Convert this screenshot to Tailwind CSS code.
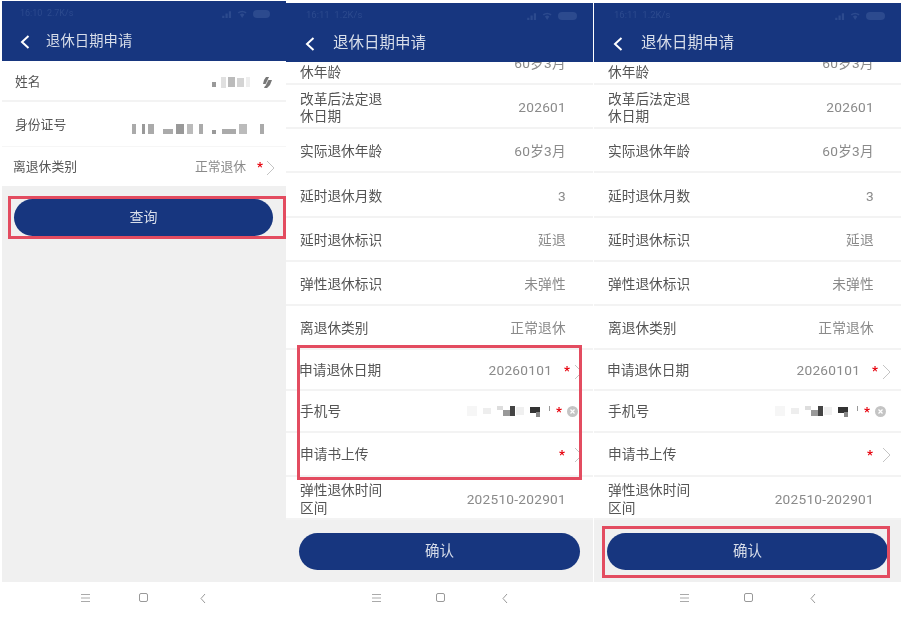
<!DOCTYPE html>
<html lang="zh-CN">
<head>
  <meta charset="UTF-8">
  <title>退休日期申请</title>
  <script src="https://cdn.jsdelivr.net/npm/@tailwindcss/browser@4"></script>
</head>
<body class="bg-white">
  <div id="app" class="relative w-[901px] h-[621px] overflow-hidden flex items-start bg-white font-['Roboto','Noto_Sans_CJK_SC',sans-serif] blur-[0.5px]">

    <!-- 查询 -->
    <section class="ml-[2px] mt-[1px] w-[284px] shrink-0 flex flex-col">
      <div class="h-[60px] bg-[#17367f]">
        <div class="h-[24px] flex items-center pl-[18px] pr-[16px] pt-[2px] text-[9px] text-[#2c4a8e]">
          <span>16:10&nbsp;&nbsp;2.7K/s</span>
          <div class="ml-auto flex items-center gap-[3px]">
            <svg width="29" height="10" viewBox="0 0 26 9" fill="#2c4a8e"><path d="M1 6h2v2H1zM4 4h2v4H4zM7 2h2v6H7zM15 3q4-3 8 0l-1 1q-3-2-6 0zM17 5q2-2 4 0l-2 3z"/></svg>
            <div class="w-[17px] h-[8px] rounded-full bg-[#2c4a8e]"></div>
          </div>
        </div>
        <div class="h-[34px] flex items-center pl-[17px]">
          <svg width="12" height="16" viewBox="0 0 12 16" fill="none" stroke="white" stroke-width="2"><path d="M9.500 2 3 8l6.500 6"/></svg>
          <span class="ml-[15px] text-[14.3px] tracking-[0.1px] text-[#d8deea]">退休日期申请</span>
        </div>
      </div>
      <div class="h-[41px] flex items-center pl-[13px] pr-[14px] pt-[3px] border-b-[2px] border-[#f3f3f3] text-[12.8px] text-[#555]">
        <span>姓名</span>
        <div class="ml-auto flex items-center">
          <div class="flex items-center gap-[2px]">
            <i class="w-[4px] h-[5px] mt-[5px] bg-[#999]"></i><i class="w-[5px] h-[11px] ml-[3px] bg-[#e0e0e0]"></i><i class="w-[7px] h-[10px] bg-[#bbb]"></i><i class="w-[7px] h-[9px] bg-[#d4d4d4]"></i><i class="w-[4px] h-[10px] bg-[#eee]"></i>
          </div>
          <svg class="ml-[13px]" width="9" height="11" viewBox="0 0 9 11" fill="#777"><path d="M3 0h3L5 3h4L7 8 4 11H1l2-4H0l1-4z"/><path d="M6 1 2 9" stroke="#fff" stroke-width="0.800"/></svg>
        </div>
      </div>
      <div class="h-[45px] flex items-center pl-[13px] pr-[22px] border-b-[1px] border-[#f6f6f6] text-[12.8px] text-[#555]">
        <span class="pt-[2px]">身份证号</span>
        <div class="ml-auto flex items-center gap-[3px] h-[10px] mt-[10px]">
          <i class="w-[4px] h-[10px] bg-[#aaa]"></i><i class="w-[3px] h-[10px] ml-[3px] bg-[#999]"></i><i class="w-[6px] h-[10px] bg-[#aaa]"></i>
          <i class="w-[10px] h-[5px] ml-[6px] mt-[5px] bg-[#aaa]"></i><i class="w-[8px] h-[10px] bg-[#999]"></i><i class="w-[6px] h-[10px] bg-[#bbb]"></i><i class="w-[4px] h-[10px] ml-[3px] bg-[#aaa]"></i>
          <i class="w-[4px] h-[4px] ml-[6px] mt-[6px] bg-[#999]"></i><i class="w-[14px] h-[5px] ml-[3px] mt-[5px] bg-[#aaa]"></i><i class="w-[8px] h-[10px] bg-[#bbb]"></i><i class="w-[4px] h-[10px] ml-[10px] bg-[#aaa]"></i>
        </div>
      </div>
      <div class="h-[39px] flex items-center pl-[11px] pr-[11px] text-[12.8px] text-[#555]">
        <span>离退休类别</span>
        <span class="ml-auto text-[#8a8a8a]">正常退休</span>
        <span class="ml-[11px] text-[13px] font-bold text-red-600">*</span>
        <svg class="ml-[3px] mt-[3px]" width="9" height="16" viewBox="0 0 9 16" fill="none" stroke="#c4c4c4" stroke-width="1"><path d="m1 1 7 7-7 7"/></svg>
      </div>
      <div class="h-[396px] bg-[#f0f0f0] px-[12px] pt-[13px]">
        <button class="w-[259px] h-[37px] rounded-full bg-[#17367f] text-[14px] text-[#d8deea]">查询</button>
      </div>
      <div class="h-[39px] flex items-start pl-[77px] pt-[11px]">
        <svg width="13" height="10" viewBox="0 0 13 10" fill="none" stroke="#aaa"><path d="M2 1.500h9M2 5h9M2 8.500h9"/></svg>
        <div class="ml-[47px] w-[9px] h-[9px] border border-[#999] rounded-[2px]"></div>
        <svg class="ml-[51px]" width="8" height="11" viewBox="0 0 8 11" fill="none" stroke="#999"><path d="M6 1 2 5.500l4 4.500"/></svg>
      </div>
    </section>

    <section id="screen-a" class="mt-[3px] w-[307px] shrink-0"></section>
    <section id="screen-b" class="mt-[3px] ml-[1px] w-[307px] shrink-0"></section>

    <!-- 红框标注 -->
    <div class="absolute left-[8px] top-[196px] w-[278px] h-[43px] border-[3px] border-[#e34c60]"></div>
    <div class="absolute left-[297px] top-[345px] w-[285px] h-[135px] border-[3px] border-[#e34c60]"></div>
    <div class="absolute left-[602px] top-[526px] w-[288px] h-[52px] border-[3px] border-[#e34c60]"></div>
  </div>

  <script>
    const star = '<span class="text-[13px] font-bold text-red-600">*</span>';
    const chevron = '<svg width="9" height="16" viewBox="0 0 9 16" fill="none" stroke="#c4c4c4" stroke-width="1"><path d="m1 1 7 7-7 7"/></svg>';

    function plainRow(label, value, height) {
      return `<div class="flex items-center justify-between pl-[14px] pr-[27px] pt-[4px] border-b-[2px] border-[#f3f3f3] bg-white shrink-0 text-[13.7px] leading-[17.500px] text-[#555]" style="height:${height}px">
        <span class="w-[86px]">${label}</span><span class="text-[#8a8a8a] tracking-[0.25px] whitespace-nowrap">${value}</span>
      </div>`;
    }

    function screen(time) {
      return `
      <div class="relative z-10 h-[59px] bg-[#17367f]">
        <div class="h-[24px] flex items-center pl-[20px] pr-[16px] pt-[1px] text-[9.5px] text-[#2c4a8e]">
          <span>${time}&nbsp;&nbsp;1.2K/s</span>
          <div class="ml-auto flex items-center gap-[3px]">
            <svg width="29" height="10" viewBox="0 0 26 9" fill="#2c4a8e"><path d="M1 6h2v2H1zM4 4h2v4H4zM7 2h2v6H7zM15 3q4-3 8 0l-1 1q-3-2-6 0zM17 5q2-2 4 0l-2 3z"/></svg>
            <div class="w-[19px] h-[8px] rounded-full bg-[#2c4a8e]"></div>
          </div>
        </div>
        <div class="h-[34px] flex items-center pl-[18px]">
          <svg width="12" height="16" viewBox="0 0 12 16" fill="none" stroke="white" stroke-width="2"><path d="M9.500 2 3 8l6.500 6"/></svg>
          <span class="ml-[17px] text-[15.5px] text-[#d8deea]">退休日期申请</span>
        </div>
      </div>
      <div class="h-[458px] overflow-hidden flex flex-col">
        <div class="-mt-[22px] flex flex-col">
          ${plainRow('改革后法定退休年龄', '60岁3月', 45)}
          ${plainRow('改革后法定退休日期', '202601', 44)}
          ${plainRow('实际退休年龄', '60岁3月', 44)}
          ${plainRow('延时退休月数', '3', 45)}
          ${plainRow('延时退休标识', '延退', 44)}
          ${plainRow('弹性退休标识', '未弹性', 44)}
          ${plainRow('离退休类别', '正常退休', 44)}
          <div class="h-[41px] flex items-center pl-[13px] pr-[10px] pt-[2px] border-b-[2px] border-[#f3f3f3] text-[13.7px] text-[#555]">
            <span>申请退休日期</span>
            <span class="ml-auto text-[#8a8a8a] tracking-[0.25px]">20260101</span>
            <span class="ml-[12px]">${star}</span>
            <span class="ml-[4px] mt-[3px]">${chevron}</span>
          </div>
          <div class="h-[42px] flex items-center pl-[14px] pr-[15px] border-b-[2px] border-[#f3f3f3] text-[13.7px] text-[#555]">
            <span>手机号</span>
            <div class="ml-auto flex items-center">
              <i class="w-[10px] h-[10px] bg-[#f6f6f6]"></i><i class="w-[8px] h-[6px] ml-[6px] bg-[#eee]"></i><i class="w-[6px] h-[4px] ml-[6px] -mt-[6px] bg-[#ddd]"></i>
              <i class="w-[7px] h-[6px] mt-[4px] bg-[#999]"></i><i class="w-[5px] h-[10px] bg-[#444]"></i><i class="w-[8px] h-[8px] ml-[1px] bg-[#f0f0f0]"></i>
              <i class="w-[10px] h-[6px] ml-[6px] -mt-[3px] bg-[#333]"></i><i class="w-[4px] h-[5px] ml-[-4px] mt-[6px] bg-[#888]"></i><i class="w-[1px] h-[5px] ml-[9px] -mt-[5px] bg-[#999]"></i>
            </div>
            <span class="ml-[6px]">${star}</span>
            <svg class="ml-[5px]" width="11" height="11" viewBox="0 0 11 11"><circle cx="5.500" cy="5.500" r="5.500" fill="#c4c4c4"/><path d="m3.500 3.500 4 4m0-4-4 4" stroke="white" stroke-width="1.200"/></svg>
          </div>
          <div class="h-[44px] flex items-center pl-[14px] pr-[10px] border-b-[2px] border-[#f3f3f3] text-[13.7px] text-[#555]">
            <span>申请书上传</span>
            <span class="ml-auto">${star}</span>
            <span class="ml-[9px] mt-[1px]">${chevron}</span>
          </div>
          ${plainRow('弹性退休时间区间', '202510-202901', 43)}
        </div>
      </div>
      <div class="h-[62px] bg-[#f0f0f0] px-[13px] pt-[13px]">
        <button class="w-[281px] h-[37px] pt-[1px] rounded-full bg-[#17367f] text-[14.5px] text-[#d8deea]">确认</button>
      </div>
      <div class="h-[39px] flex items-start pl-[85px] pt-[11px]">
        <svg width="12" height="10" viewBox="0 0 12 10" fill="none" stroke="#aaa"><path d="M1 1.500h9M1 5h9M1 8.500h9"/></svg>
        <div class="ml-[53px] w-[9px] h-[9px] border border-[#999] rounded-[2px]"></div>
        <svg class="ml-[56px]" width="8" height="11" viewBox="0 0 8 11" fill="none" stroke="#999"><path d="M6 1 2 5.500l4 4.500"/></svg>
      </div>`;
    }

    document.getElementById('screen-a').innerHTML = screen('16:11');
    document.getElementById('screen-b').innerHTML = screen('16:11');
  </script>
</body>
</html>
